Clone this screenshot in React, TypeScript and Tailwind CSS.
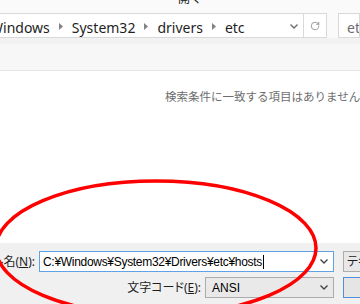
import { RotateCw } from 'lucide-react';

const jp = "font-['Noto_Sans','Noto_Sans_CJK_JP',sans-serif]";

function Crumb({ label, last }: { label: string; last?: boolean }) {
  return (
    <div className="flex items-center shrink-0">
      <span className="text-[14px] text-[#1e1e1e] leading-none mt-[4px]">{label}</span>
      {!last && (
        <svg width="4" height="7" viewBox="0 0 4 7" className="mx-[9px] mt-[2px]">
          <path d="M0 0 L4 3.5 L0 7 Z" fill="#838383" />
        </svg>
      )}
    </div>
  );
}

function Chevron({ color = '#6d6d6d' }: { color?: string }) {
  return (
    <svg width="8" height="5" viewBox="0 0 8 5" className="shrink-0">
      <path d="M0.5 0.5 L4 4 L7.5 0.5" stroke={color} strokeWidth="1.4" fill="none" />
    </svg>
  );
}

export default function App() {
  return (
    <div className={`relative w-[360px] h-[304px] overflow-hidden bg-[#f0f0f0] ${jp}`}>
      {/* title */}
      <div className="h-[13px] bg-[#fafafa] flex justify-center overflow-hidden">
        <span className="text-[12px] leading-none text-[#222] mt-[-7px] ml-[20px]">開く</span>
      </div>

      {/* address row */}
      <div className="flex h-[25px] bg-[#fafafa]">
        <div className="flex items-center shrink-0 w-[339px] ml-[-12px] border border-[#d9d9d9] bg-white">
          <div className="flex items-center flex-1 pl-[1px]">
            <Crumb label="Windows" />
            <Crumb label="System32" />
            <Crumb label="drivers" />
            <Crumb label="etc" last />
          </div>
          <div className="w-[17px] flex justify-center pr-[2px] mt-[1px]">
            <Chevron />
          </div>
          <div className="w-px self-stretch bg-[#d9d9d9]" />
          <div className="w-[22px] flex justify-center mt-[1px]">
            <RotateCw size={10} strokeWidth={1.6} color="#6d6d6d" />
          </div>
        </div>
        <div className="flex-1 ml-[11px] border border-[#d9d9d9] bg-white flex items-center pl-[8px] overflow-hidden whitespace-nowrap">
          <span className="text-[14px] text-[#6d6d6d] leading-none mt-[4px]">etc の検索</span>
        </div>
      </div>

      {/* gap band */}
      <div className="h-[6px] bg-[#f2f2f2]" />

      {/* toolbar */}
      <div className="h-[27px] bg-[#f7f7f7] border-b border-[#e6e6e6]" />

      {/* list area */}
      <div className="h-[172px] bg-white pt-[12px] pl-[165px] whitespace-nowrap">
        <span className="text-[11.5px] text-[#6d6d6d]">検索条件に一致する項目はありません。</span>
      </div>

      {/* bottom panel */}
      <div className="h-[60px] bg-[#f0f0f0] pt-[8px] flex flex-col gap-[5px]">
        <div className="flex items-center h-[21px]">
          <div className="w-[35px] shrink-0 flex justify-end whitespace-nowrap">
            <span className="text-[12px] text-[#1e1e1e] [font-feature-settings:'palt']">
              ファイル名(<span className="underline">N</span>):
            </span>
          </div>
          <div className="ml-[4px] shrink-0 w-[295px] h-[21px] border border-[#5fa2e6] bg-white flex items-center pl-[3px] pr-[5px]">
            <span className="font-['Liberation_Sans',sans-serif] text-[12px] tracking-[-0.3px] text-black leading-none whitespace-nowrap">C:¥Windows¥System32¥Drivers¥etc¥hosts</span>
            <span className="w-px h-[14px] bg-black ml-[1px]" />
            <div className="flex-1" />
            <Chevron color="#444" />
          </div>
          <div className="ml-[9px] shrink-0 w-[80px] h-[21px] border border-[#acacac] bg-[#e8e8e8] flex items-center pl-[3px] whitespace-nowrap">
            <span className="text-[12px] text-[#1e1e1e] [font-feature-settings:'palt']">テキスト文書 (*.txt)</span>
          </div>
        </div>
        <div className="flex items-center h-[21px]">
          <div className="w-[201px] shrink-0 flex justify-end whitespace-nowrap">
            <span className="text-[12px] text-[#1e1e1e] [font-feature-settings:'palt']">
              文字コード(<span className="underline">E</span>):
            </span>
          </div>
          <div className="ml-[4px] shrink-0 w-[129px] h-[21px] border border-[#acacac] bg-[#e9e9e9] flex items-center pl-[6px] pr-[5px]">
            <span className="font-['Liberation_Sans',sans-serif] text-[12px] text-black leading-none">ANSI</span>
            <div className="flex-1" />
            <Chevron color="#444" />
          </div>
          <div className="ml-[9px] shrink-0 w-[80px] h-[21px] border border-[#4d90d6] bg-[#e5e5e5] flex items-center justify-center">
            <span className="text-[12px] text-[#1e1e1e]">開く(O)</span>
          </div>
        </div>
      </div>

      {/* red annotation ellipse */}
      <svg className="absolute inset-0 pointer-events-none" width="360" height="304" viewBox="0 0 360 304">
        <ellipse cx="156" cy="248" rx="160" ry="67" fill="none" stroke="#ff0000" strokeWidth="3.5" />
      </svg>
    </div>
  );
}
